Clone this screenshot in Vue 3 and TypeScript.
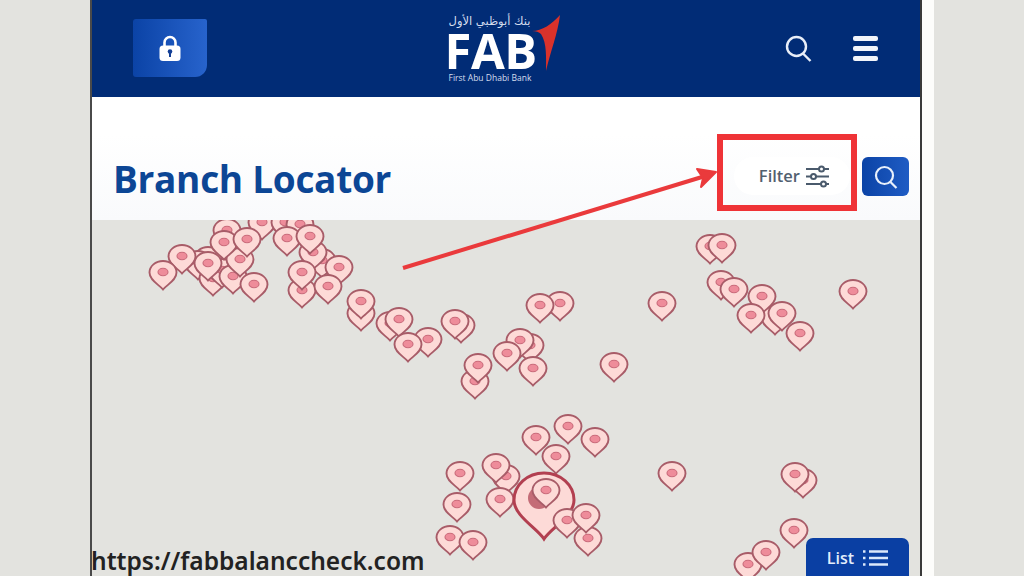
<script setup lang="ts">
interface Pin { x: number; y: number }
const toPin = ([x, y]: number[]): Pin => ({ x: x - 92 - 15, y: y - 220 - 12 })
const pins: Pin[] = [
  [227,230],[262,222],[285,222],[300,224],[208,258],[198,262],[213,278],[222,270],[233,276],[240,259],[224,242],[247,239],[254,284],[182,256],[163,272],[208,263],
  [322,260],[313,252],[302,290],[339,267],[287,238],[310,236],[328,286],[302,272],
  [361,313],[361,301],[390,323],[399,319],[428,339],[408,344],[461,325],[455,321],
  [475,381],[478,365],[530,345],[520,340],[507,353],[533,368],[560,303],[540,305],[614,364],[662,303],
  [710,246],[722,245],[721,282],[734,289],[775,317],[762,296],[751,315],[782,313],[800,333],[853,291],
  [568,426],[536,437],[595,439],[556,456],[460,473],[506,476],[496,465],[457,504],[500,499],[450,537],[473,542],
  [672,473],[803,480],[795,474],[794,530],[748,564],[766,552]
].map(toPin)
const centerPin: Pin = toPin([546, 490])
const frontPins: Pin[] = [[567,520],[588,538],[586,515]].map(toPin)
</script>

<template>
  <div class="screen">
    <main class="phone">
      <header class="topbar">
        <div class="topbar-left">
          <button class="lock">
            <svg width="24" height="28" viewBox="0 0 24 28">
              <path d="M6.500 13V8.500a5.500 5.500 0 0 1 11 0V13" fill="none" stroke="#fff" stroke-width="2.600" />
              <rect x="1.500" y="11.500" width="21" height="15.500" rx="3.500" fill="#fff" />
              <circle cx="12" cy="17.500" r="2.300" fill="#123f96" />
              <rect x="11" y="18" width="2" height="5" fill="#123f96" />
            </svg>
          </button>
        </div>
        <div class="logo">
          <span class="logo-ar" dir="rtl">بنك أبوظبي الأول</span>
          <span class="logo-main">FAB</span>
          <span class="logo-en">First Abu Dhabi Bank</span>
          <svg class="swoosh" width="30" height="58" viewBox="0 0 30 58">
            <path d="M1 17C11 17 21 10 29 1C27 19 19 39 15 57C15 44 16 29 10 20C8 18 5 17 1 17Z" fill="#d9322b" />
          </svg>
        </div>
        <div class="topbar-right">
          <svg width="27" height="27" viewBox="0 0 27 27" fill="none" stroke="#e8eef8" stroke-width="2.400">
            <circle cx="11.500" cy="11.500" r="9.500" />
            <path d="M18 18.500l7.500 7.500" />
          </svg>
          <div class="burger"><i></i><i></i><i></i></div>
        </div>
      </header>

      <section class="titlebar">
        <h1>Branch Locator</h1>
        <div class="actions">
          <div class="filter">
            <span>Filter</span>
            <svg width="25" height="25" viewBox="0 0 25 25" fill="none" stroke="#4a5a6c" stroke-width="2">
              <path d="M1 5h13M19 5h5M1 12.500h5M11 12.500h13M1 20h15M21 20h3" />
              <circle cx="16.500" cy="5" r="2.500" />
              <circle cx="8.500" cy="12.500" r="2.500" />
              <circle cx="18.500" cy="20" r="2.500" />
            </svg>
          </div>
          <button class="search-btn">
            <svg width="26" height="26" viewBox="0 0 26 26" fill="none" stroke="#e8f0fb" stroke-width="2.200">
              <circle cx="11.500" cy="11.500" r="8.500" />
              <path d="M17.500 18l6 6" />
            </svg>
          </button>
        </div>
        <div class="highlight"></div>
      </section>

      <section class="map">
        <div class="pins">
          <svg v-for="(p, i) in pins" :key="i" class="pin" :style="{ left: p.x + 'px', top: p.y + 'px' }" width="30" height="31" viewBox="0 0 30 31">
            <path d="M15 29.500C11 24.500 1.500 20.500 1.500 12.500A13.500 11.500 0 0 1 28.500 12.500C28.500 20.500 19 24.500 15 29.500Z" fill="#fddad7" stroke="#a85c68" stroke-width="1.900" />
            <ellipse cx="15" cy="12" rx="5" ry="3.800" fill="#ee8c9a" stroke="#c96a7a" stroke-width="1.100" />
          </svg>

          <svg class="big-pin" width="66" height="72" viewBox="0 0 66 72">
            <path d="M32 68C25 57 2 45 2 29A30 27 0 0 1 62 29C62 45 39 57 32 68Z" fill="#fddad7" stroke="#b23f50" stroke-width="3" />
            <circle cx="27" cy="27" r="11" fill="#b5505f" opacity=".8" />
          </svg>
          <svg class="pin" :style="{ left: centerPin.x + 'px', top: centerPin.y + 'px' }" width="30" height="31" viewBox="0 0 30 31">
            <path d="M15 29.500C11 24.500 1.500 20.500 1.500 12.500A13.500 11.500 0 0 1 28.500 12.500C28.500 20.500 19 24.500 15 29.500Z" fill="#fddad7" stroke="#a85c68" stroke-width="1.900" />
            <ellipse cx="15" cy="12" rx="5" ry="3.800" fill="#ee8c9a" stroke="#c96a7a" stroke-width="1.100" />
          </svg>
          <svg v-for="(p, i) in frontPins" :key="'f' + i" class="pin" :style="{ left: p.x + 'px', top: p.y + 'px' }" width="30" height="31" viewBox="0 0 30 31">
            <path d="M15 29.500C11 24.500 1.500 20.500 1.500 12.500A13.500 11.500 0 0 1 28.500 12.500C28.500 20.500 19 24.500 15 29.500Z" fill="#fddad7" stroke="#a85c68" stroke-width="1.900" />
            <ellipse cx="15" cy="12" rx="5" ry="3.800" fill="#ee8c9a" stroke="#c96a7a" stroke-width="1.100" />
          </svg>
        </div>

        <button class="list-btn">
          <span>List</span>
          <svg width="26" height="18" viewBox="0 0 26 18" fill="none" stroke="#dbe8fb" stroke-width="2.400">
            <path d="M1 2.500h2.500M1 9h2.500M1 15.500h2.500M7 2.500h19M7 9h19M7 15.500h19" />
          </svg>
        </button>
      </section>
    </main>
    <div class="edge"></div>

    <svg class="arrow" width="1024" height="576" viewBox="0 0 1024 576">
      <path d="M403 268L702 177" stroke="#ea3a3c" stroke-width="4" fill="none" />
      <path d="M716 172L697 169L703 178L701 187Z" fill="#ea3a3c" stroke="#ea3a3c" stroke-width="2" stroke-linejoin="round" />
    </svg>
    <div class="url">https://fabbalanccheck.com</div>
  </div>
</template>

<style>
html, body { margin: 0; background: #e3e3df; }
</style>

<style scoped>
.screen {
  position: relative;
  width: 1024px;
  height: 576px;
  overflow: hidden;
  display: flex;
  padding-left: 90px;
  box-sizing: border-box;
  background: #e3e3df;
  font-family: "Open Sans", "Noto Sans", sans-serif;
}
.phone {
  width: 832px;
  height: 576px;
  box-sizing: border-box;
  border-left: 2px solid #4a4a4a;
  border-right: 2px solid #3a3a3a;
  display: flex;
  flex-direction: column;
}
.edge { width: 12px; background: #fdfdfb; }

.topbar {
  height: 97px;
  flex: none;
  background: #012c76;
  display: grid;
  grid-template-columns: 1fr auto 1fr;
  align-items: center;
  padding: 0 42px 0 41px;
}
.topbar-left { display: flex; }
.lock {
  width: 74px;
  height: 58px;
  margin-top: -1px;
  border: 0;
  padding: 0;
  display: flex;
  align-items: center;
  justify-content: center;
  background: linear-gradient(90deg, #0b43a6, #2763cc);
  border-radius: 3px 2px 12px 3px;
}
.logo {
  position: relative;
  width: 112px;
  height: 70px;
  margin-left: -2px;
  color: #fff;
  display: flex;
  flex-direction: column;
  align-items: flex-start;
}
.logo-ar {
  width: 82px;
  height: 16px;
  font: 11.500px/14px "DejaVu Sans", sans-serif;
  color: #d5deee;
  text-align: center;
  white-space: nowrap;
}
.logo-main {
  font-size: 49px;
  font-weight: 700;
  line-height: 40px;
  letter-spacing: -.500px;
  margin: 1px 0 0 -4px;
}
.logo-en {
  font-size: 8.500px;
  line-height: 12px;
  margin-top: 2px;
  color: #d5deee;
  white-space: nowrap;
}
.swoosh { position: absolute; left: 82px; top: 0; }
.topbar-right {
  display: flex;
  justify-content: flex-end;
  align-items: center;
  gap: 41px;
}
.burger {
  width: 25px;
  display: flex;
  flex-direction: column;
  gap: 5px;
}
.burger i {
  height: 5px;
  background: #f2f5fa;
  border-radius: 2px;
}

.titlebar {
  position: relative;
  height: 123px;
  flex: none;
  box-sizing: border-box;
  background: linear-gradient(180deg, #fff 30%, #f9fafc 100%);
  display: flex;
  align-items: center;
  justify-content: space-between;
  padding: 43px 11px 3px 21px;
}
h1 {
  margin: 0;
  font-size: 37px;
  font-weight: 700;
  letter-spacing: -.300px;
  color: #0c4695;
  white-space: nowrap;
}
.actions {
  display: flex;
  align-items: center;
  gap: 12px;
  margin-top: -4px;
}
.filter {
  width: 116px;
  height: 38px;
  box-sizing: border-box;
  display: flex;
  align-items: center;
  justify-content: flex-end;
  gap: 5px;
  padding-right: 20px;
  margin-top: -2px;
  border-radius: 19px;
  background: #fff;
  color: #52606f;
  font-size: 16.500px;
  font-weight: 600;
}
.filter svg { margin-top: 2px; }
.search-btn {
  width: 47px;
  height: 39px;
  padding: 0;
  border: 0;
  border-radius: 6px;
  display: flex;
  align-items: center;
  justify-content: center;
  background: linear-gradient(90deg, #0b43a6, #1f5cc4);
}
.highlight {
  position: absolute;
  left: 625px;
  top: 37px;
  width: 140px;
  height: 77px;
  box-sizing: border-box;
  border: 6px solid #ef3337;
}

.map {
  position: relative;
  flex: 1;
  overflow: hidden;
  background: #e3e3df;
}
.pins { position: absolute; inset: 0; filter: blur(.5px); }
.pin { position: absolute; }
.big-pin { position: absolute; left: 420px; top: 251px; }
.list-btn {
  position: absolute;
  left: 714px;
  top: 318px;
  width: 103px;
  height: 46px;
  padding: 0 0 6px;
  border: 0;
  border-radius: 7px;
  display: flex;
  align-items: center;
  justify-content: center;
  gap: 8px;
  background: #0a3fa3;
  color: #e3edfb;
  font-family: "Open Sans", sans-serif;
  font-size: 16px;
  font-weight: 600;
}

.arrow { position: absolute; left: 0; top: 0; pointer-events: none; }
.url {
  position: absolute;
  left: 91px;
  top: 547px;
  height: 28px;
  font-family: "Noto Sans", sans-serif;
  font-size: 24.500px;
  line-height: 28px;
  font-weight: 600;
  color: #222;
  white-space: nowrap;
}
</style>
